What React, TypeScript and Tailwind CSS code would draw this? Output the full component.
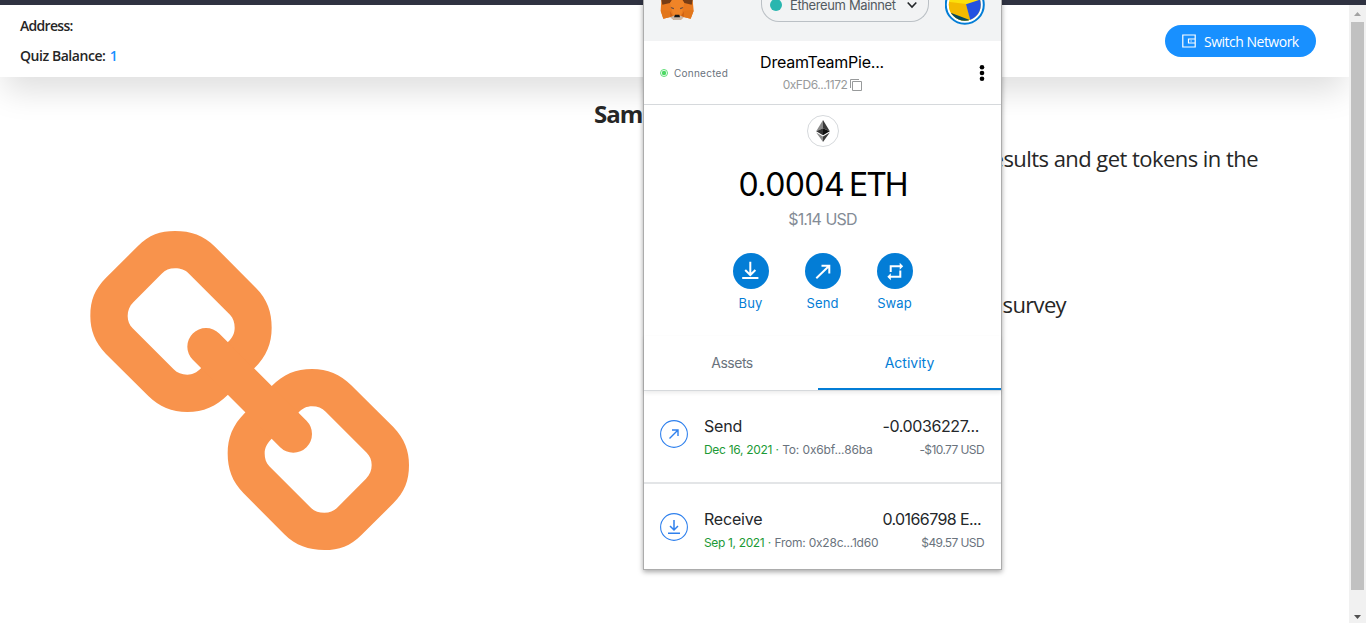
import type { ReactNode } from "react";

const LINK =
  "M315 63C362 63 401 76 435 110L558 234C592 268 605 307 605 353C605 400 590 438 553 475L473 555C438 590 400 606 352 606C305 606 268 590 235 558L108 432C74 396 61 360 61 318C61 270 74 238 108 203L203 109C238 74 270 63 315 63Z" +
  "M315 175C332 175 345 179 357 191L480 314C490 324 494 338 494 353C494 370 487 383 473 397L393 475C380 488 368 494 352 494C335 494 322 489 311 478L188 355C178 345 173 333 173 318C173 303 178 289 190 277L275 191C286 180 298 175 315 175Z";

function ChainLinks() {
  return (
    <svg className="h-[320px] w-[320px] shrink-0" viewBox="60 60 960 960" fill="#f8934c" fillRule="evenodd">
      <path d={LINK} />
      <path d={LINK} transform="rotate(180 539 541.5)" />
      <path d="M408 410 670 672" stroke="#f8934c" strokeWidth="112" strokeLinecap="round" />
    </svg>
  );
}

function Fox() {
  return (
    <svg className="h-[22px] w-9 shrink-0" viewBox="60 0 108 66">
      <path d="M64 0H158L161 32 152 56 131 51 122 60H101L91 51 70 56 62 32Z" fill="#e8791f" />
      <path d="M64 0H96L90 9 67 14ZM127 0H158L155 14 133 9Z" fill="#763d16" />
      <path d="M96 0H127L133 9 125 40 122 46H101L98 40 90 9Z" fill="#f08427" />
      <path d="M62 32 68 30 91 33V51L70 56ZM161 32 154 30 131 33V51L152 56Z" fill="#e2761b" />
      <path d="M90 34 98 47 91 51ZM132 34 124 47 131 51Z" fill="#cd6116" />
      <path d="M92 21 102 24 101 28 94 25ZM130 21 120 24 121 28 128 25Z" fill="#5b4a48" />
      <path d="M101 47H122L131 52 122 60H101L91 52Z" fill="#c9b5a4" />
      <path d="M105 44H118L120 52H102Z" fill="#161616" />
    </svg>
  );
}

function Avatar() {
  return (
    <svg className="h-[25px] w-10 shrink-0" viewBox="945 0 40 25">
      <circle cx="964.8" cy="4.7" r="19" fill="#fff" stroke="#037dd6" strokeWidth="2" />
      <clipPath id="avatar-disc">
        <circle cx="964.8" cy="4.7" r="16" />
      </clipPath>
      <g clipPath="url(#avatar-disc)">
        <path d="M945-15h40v40h-40z" fill="#fbe00c" />
        <path d="M945 1.5 966 4 972 25H945Z" fill="#f3ba00" />
        <path d="M966 4.3 985-2V20L970.5 21Z" fill="#2452e1" />
        <path d="M945 10.5 971 20.5V25H945Z" fill="#03495e" />
      </g>
    </svg>
  );
}

const Arrow = () => <path d="M11.3 25.3 23.7 13.3M16.5 12.7H24.3V20.5" />;
const Down = () => <path d="M17.3 8.8V22M12.2 17 17.3 22 22.4 17M9.2 25.1H25.4" />;
const Swap = () => (
  <>
    <path d="M13.7 19V13.3H24M23.3 17.5V23.7H12.5" />
    <path d="M22.7 9.8 26.2 13.3 22.7 16.8ZM13.8 20.2 10.3 23.7 13.8 27.2Z" fill="#fff" stroke="none" />
  </>
);

function Action({ label, children }: { label: string; children: ReactNode }) {
  return (
    <div className="flex w-9 flex-col items-center">
      <div className="flex h-9 w-9 items-center justify-center rounded-full bg-[#037dd6]">
        <svg className="h-9 w-9" viewBox="0 0 36 36" fill="none" stroke="#fff" strokeWidth="2">{children}</svg>
      </div>
      <span className="mt-[5px] text-[13px] leading-[18px] tracking-[0.1px] text-[#037dd6]">{label}</span>
    </div>
  );
}

type RowProps = { title: string; amount: string; date: string; peer: string; usd: string; amountClass: string; dateClass: string; peerClass: string; icon: ReactNode };

function ActivityRow({ title, amount, date, peer, usd, amountClass, dateClass, peerClass, icon }: RowProps) {
  return (
    <div className="flex pt-6 pr-4 pl-4">
      <svg className="mt-[5px] h-7 w-7 shrink-0" viewBox="0 0 28 28" fill="none" stroke="#2f80ed">
        <circle cx="14" cy="14" r="13.4" strokeWidth="1.1" />
        {icon}
      </svg>
      <div className="ml-4 flex grow flex-col">
        <div className="flex justify-between text-[16px] leading-[22px] text-[#24272a]">
          <span className="tracking-[-0.2px]">{title}</span>
          <span className={amountClass}>{amount}</span>
        </div>
        <div className="mt-1 flex justify-between text-[12px] leading-[18px] whitespace-nowrap text-[#6a737d]">
          <div className="flex">
            <span className={dateClass}>{date}</span>
            <span className="w-[10px] text-center text-[#28a745]">·</span>
            <span className={peerClass}>{peer}</span>
          </div>
          <span className="mr-px tracking-[-0.6px]">{usd}</span>
        </div>
      </div>
    </div>
  );
}

function WalletPopup() {
  return (
    <div className="absolute top-0 left-[643px] h-[570px] w-[359px] border border-t-0 border-[#acacac] bg-white font-['Inter',sans-serif] shadow-[0_2px_5px_rgba(0,0,0,0.35)]">
      <div className="flex h-[41px] items-start bg-[#f2f3f4] pl-4">
        <Fox />
        <div className="ml-[65px] flex h-[22px] w-[168px] items-start rounded-b-[18px] border border-t-0 border-[#bbc0c5] pl-2">
          <svg className="h-[11px] w-3 shrink-0" viewBox="0 0 12 11"><circle cx="6" cy="5" r="6" fill="#29b6af" /></svg>
          <span className="-mt-1 ml-2 w-[106px] text-[13px] leading-[18px] tracking-[-0.38px] whitespace-nowrap text-[#535a61]">Ethereum Mainnet</span>
          <svg className="mt-[1px] ml-[11px] h-2 w-[10px] shrink-0" viewBox="0 0 10 8" fill="none" stroke="#24272a" strokeWidth="1.6"><path d="M.7 1.5 5 6 9.3 1.5" /></svg>
        </div>
        <div className="ml-4"><Avatar /></div>
      </div>

      <div className="flex h-[64px] border-b border-[#d6d9dc] pl-4">
        <div className="flex w-[94px] items-center">
          <svg className="h-2 w-2" viewBox="0 0 8 8"><circle cx="4" cy="4" r="3.5" fill="none" stroke="#4cd964" strokeWidth=".9" /><circle cx="4" cy="4" r="2.2" fill="#4cd964" /></svg>
          <span className="ml-[6px] text-[10px] leading-4 tracking-[0.25px] text-[#6a737d]">Connected</span>
        </div>
        <div className="flex w-[136px] flex-col items-center pt-[10px]">
          <span className="text-[16px] leading-[22px] tracking-[-0.25px] text-black">DreamTeamPie...</span>
          <div className="mt-[3px] ml-px flex items-center">
            <span className="text-[12px] leading-[18px] tracking-[-0.45px] text-[#989a9b]">0xFD6...1172</span>
            <svg className="ml-[3px] h-3 w-3" viewBox="0 0 12 12" fill="none" stroke="#989a9b"><path d="M.5 9V.5H9M2.5 2.5h9v9h-9z" /></svg>
          </div>
        </div>
        <svg className="mt-[24px] ml-[89px] h-4 w-[6px]" viewBox="0 0 6 16"><circle cx="3" cy="2.3" r="2.3" /><circle cx="3" cy="8" r="2.3" /><circle cx="3" cy="13.7" r="2.3" /></svg>
      </div>

      <div className="flex h-[231px] flex-col items-center pt-[10px]">
        <svg className="h-8 w-8 shrink-0" viewBox="0 0 32 32">
          <circle cx="16" cy="16" r="15.5" fill="#fff" stroke="#d6d9dc" />
          <path d="M16 5 9.2 16.3 16 13.2Z" fill="#8a8a8a" />
          <path d="M16 5 22.8 16.3 16 13.2Z" fill="#393939" />
          <path d="M9.2 16.3 16 13.2V20.2Z" fill="#343434" />
          <path d="M22.8 16.3 16 13.2V20.2Z" fill="#111" />
          <path d="M9.2 17.6 16 21.6V27Z" fill="#8c8c8c" />
          <path d="M22.8 17.6 16 21.6V27Z" fill="#3c3c3b" />
        </svg>
        <div className="mt-[15px] flex gap-[5px] text-[32px] leading-[45px] text-black">
          <span className="tracking-[-0.6px]">0.0004</span>
          <span className="tracking-[-2.1px]">ETH</span>
        </div>
        <span className="mt-px text-[16px] leading-[22px] tracking-[-0.85px] [word-spacing:1px] text-[#848c96]">$1.14 USD</span>
        <div className="mt-[23px] flex gap-9">
          <Action label="Buy"><Down /></Action>
          <Action label="Send"><Arrow /></Action>
          <Action label="Swap"><Swap /></Action>
        </div>
      </div>

      <div className="flex h-[55px] border-b border-[#d6d9dc] text-[14px] leading-5 shadow-[0_2px_4px_rgba(0,0,0,0.08)]">
        <div className="flex w-[174px] justify-center pt-[17px] pl-[2px] tracking-[-0.5px] text-[#6a737d]">Assets</div>
        <div className="flex w-[183px] justify-center border-b-2 border-[#037dd6] pt-[17px] text-[#037dd6]">Activity</div>
      </div>

      <div className="h-[93px] border-b-2 border-[#e3e5e7]">
        <ActivityRow title="Send" amount="-0.0036227..." date="Dec 16, 2021" peer="To: 0x6bf...86ba" usd="-$10.77 USD"
          amountClass="mr-[6px] tracking-[-0.4px]" dateClass="text-[#1c9a36] tracking-[-0.3px]" peerClass="tracking-[-0.13px]"
          icon={<path d="M9.5 18.5 17.5 10.5M12 10H18V16" strokeWidth="1.4" />} />
      </div>
      <ActivityRow title="Receive" amount="0.0166798 E..." date="Sep 1, 2021" peer="From: 0x28c...1d60" usd="$49.57 USD"
        amountClass="mr-1 tracking-[-0.6px]" dateClass="text-[#1c9a36] tracking-[-0.35px]" peerClass="tracking-[-0.22px]"
        icon={<path d="M14 7V16.5M10 13 14 17 18 13M8 20.3H20" strokeWidth="1.5" />} />
    </div>
  );
}

export default function App() {
  return (
    <div className="relative flex h-[623px] w-[1366px] flex-col overflow-hidden bg-white font-['Open_Sans',sans-serif] text-[#262626]">
      <div className="h-[5px] shrink-0 bg-[#2f3241]" />
      <div className="flex grow">
        <div className="flex w-[1349px] flex-col overflow-hidden">
          <header className="flex h-[72px] shrink-0 justify-between bg-white pr-[33px] pl-5 shadow-[0_18px_32px_-4px_rgba(0,0,0,0.13)]">
            <div className="flex flex-col gap-2 pt-[10px] text-[14px] leading-[22px] font-semibold">
              <div className="tracking-[-0.7px]">Address:</div>
              <div className="tracking-[-0.45px]">Quiz Balance: <span className="ml-px text-[#1890ff]">1</span></div>
            </div>
            <button className="mt-5 flex h-8 w-[151px] items-center rounded-full bg-[#1890ff] pl-[17px] text-[14px] text-white">
              <svg className="h-[14px] w-[14px]" viewBox="0 0 14 14" fill="none" stroke="#fff" strokeWidth="1.2"><path d="M.8 1H13.2V13H.8ZM13 5H6.5V9H13M8.5 7H9.7" /></svg>
              <span className="ml-2 tracking-[-0.5px]">Switch Network</span>
            </button>
          </header>
          <main className="flex pl-[90px]">
            <div className="pt-[153px]"><ChainLinks /></div>
            <div className="ml-[184px] flex w-[664px] flex-col pt-[19px]">
              <h1 className="text-[24px] leading-9 font-bold tracking-[-1px]">Sample</h1>
              <p className="mt-[10px] text-right text-[22px] leading-8 tracking-[-0.55px]">results and get tokens in the</p>
              <p className="mt-[114px] pr-[192px] text-right text-[22px] leading-8 tracking-[-0.65px]">survey</p>
            </div>
          </main>
        </div>
        <div className="flex w-[17px] flex-col items-center bg-[#f1f1f1]">
          <div className="flex h-[17px] items-center"><svg className="h-1 w-[7px]" viewBox="0 0 7 4"><path d="M0 4 3.5 0 7 4Z" fill="#a3a3a3" /></svg></div>
          <div className="h-[568px] w-[13px] bg-[#c1c1c1]" />
          <svg className="mt-[25px] h-1 w-[7px]" viewBox="0 0 7 4"><path d="M0 0 3.5 4 7 0Z" fill="#505050" /></svg>
        </div>
      </div>
      <WalletPopup />
    </div>
  );
}
